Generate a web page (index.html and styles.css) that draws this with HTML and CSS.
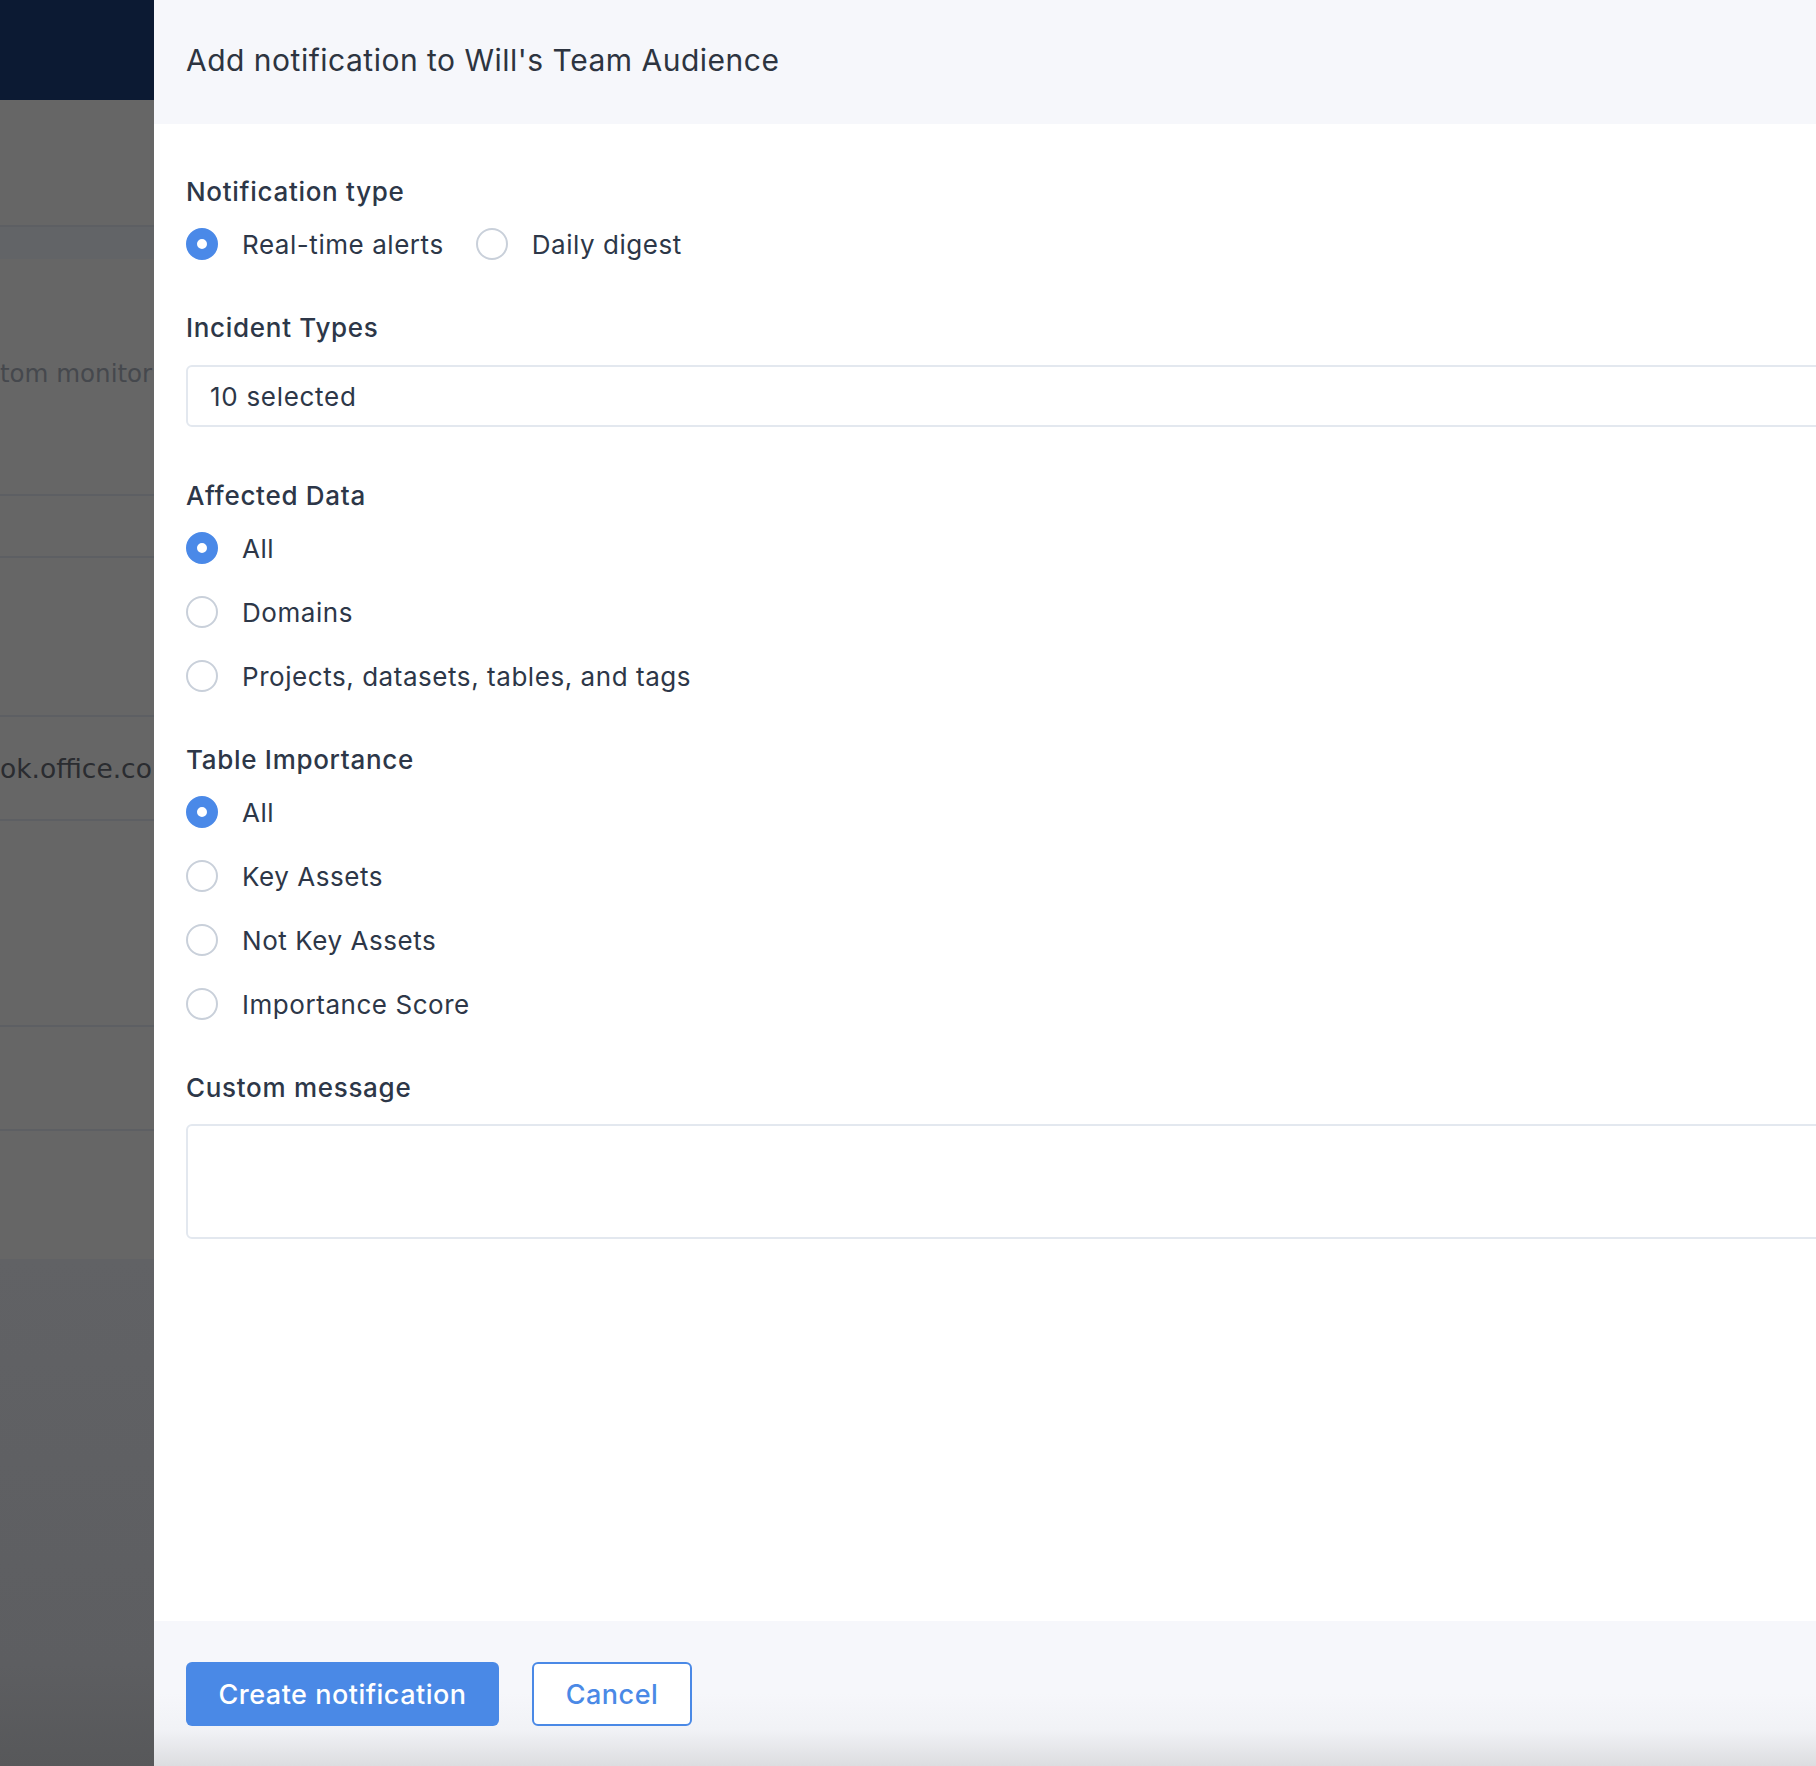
FILE: index.html
```html
<!DOCTYPE html>
<html lang="en">
<head>
    <meta charset="UTF-8">
    <meta name="viewport" content="width=device-width, initial-scale=1.0">
    <title>Add notification</title>
    <link rel="stylesheet" href="styles.css">
</head>
<body>
    <div class="page">
        <!-- dimmed app behind the drawer -->
        <div class="backdrop">
            <div class="bd-nav"></div>
            <div class="bd-row bd-r1"></div>
            <div class="bd-row bd-band"></div>
            <div class="bd-row bd-r2"><span class="bd-text">tom monitor</span></div>
            <div class="bd-row bd-r3"></div>
            <div class="bd-row bd-r4"></div>
            <div class="bd-row bd-r5"><span class="bd-text bd-text-2">ok.office.co</span></div>
            <div class="bd-row bd-r6"></div>
            <div class="bd-row bd-r7"></div>
            <div class="bd-row bd-r8"></div>
            <div class="bd-rest"></div>
        </div>

        <div class="drawer">
            <div class="drawer-header">
                <h1>Add notification to Will's Team Audience</h1>
            </div>

            <form class="drawer-body">
                <div class="section">
                    <div class="field-label">Notification type</div>
                    <div class="radio-inline">
                        <label class="radio"><span class="dot checked"></span>Real-time alerts</label>
                        <label class="radio"><span class="dot"></span>Daily digest</label>
                    </div>
                </div>

                <div class="section">
                    <div class="field-label">Incident Types</div>
                    <div class="text-input select-box">10 selected</div>
                </div>

                <div class="section">
                    <div class="field-label">Affected Data</div>
                    <div class="radio-list">
                        <label class="radio"><span class="dot checked"></span>All</label>
                        <label class="radio"><span class="dot"></span>Domains</label>
                        <label class="radio"><span class="dot"></span>Projects, datasets, tables, and tags</label>
                    </div>
                </div>

                <div class="section">
                    <div class="field-label">Table Importance</div>
                    <div class="radio-list">
                        <label class="radio"><span class="dot checked"></span>All</label>
                        <label class="radio"><span class="dot"></span>Key Assets</label>
                        <label class="radio"><span class="dot"></span>Not Key Assets</label>
                        <label class="radio"><span class="dot"></span>Importance Score</label>
                    </div>
                </div>

                <div class="section">
                    <div class="field-label">Custom message</div>
                    <div class="text-input message-box"></div>
                </div>
            </form>

            <div class="drawer-footer">
                <button type="button" class="btn btn-primary">Create notification</button>
                <button type="button" class="btn btn-outline">Cancel</button>
            </div>
        </div>
    </div>
</body>
</html>
```

FILE: styles.css
```css
* {
    margin: 0;
    padding: 0;
    box-sizing: border-box;
}

body {
    font-family: Inter, "Open Sans", Arial, sans-serif;
    color: #2d3748;
    overflow: hidden;
    background: #ffffff;
}

.page {
    display: flex;
    width: 1816px;
    height: 1766px;
    overflow: hidden;
}

/* backdrop */

.backdrop {
    width: 154px;
    flex-shrink: 0;
    display: flex;
    flex-direction: column;
    background-color: #666666;
    overflow: hidden;
}

.bd-nav {
    height: 100px;
    background-color: #0c1a33;
}

.bd-row {
    display: flex;
    align-items: center;
    border-bottom: 2px solid #5d5f63;
    white-space: nowrap;
}

.bd-r1 { height: 127px; }
.bd-band { height: 32px; background-color: #626467; border-bottom: none; }
.bd-r2 { height: 237px; }
.bd-r3 { height: 62px; }
.bd-r4 { height: 159px; }
.bd-r5 { height: 104px; }
.bd-r6 { height: 206px; }
.bd-r7 { height: 104px; }
.bd-r8 { height: 128px; border-bottom: none; }

.bd-rest {
    flex: 1;
    background: linear-gradient(#616265, #5d5e61 80%, #57585a);
}

.bd-text {
    font-family: "DejaVu Sans", Verdana, sans-serif;
    font-size: 24.5px;
    color: #45484d;
    margin-top: -6px;
}

.bd-text-2 {
    font-size: 26.5px;
    color: #2a2c30;
    margin-top: 0;
}

/* drawer */

.drawer {
    width: 1800px;
    flex-shrink: 0;
    display: flex;
    flex-direction: column;
    background: #ffffff;
}

.drawer-header {
    height: 124px;
    display: flex;
    align-items: center;
    padding: 0 32px 4px;
    background-color: #f6f7fb;
}

.drawer-header h1 {
    font-size: 30px;
    font-weight: 400;
    color: #2d3440;
    letter-spacing: 0.5px;
}

.drawer-body {
    flex: 1;
    padding: 52px 32px 0;
}

.section {
    display: flex;
    flex-direction: column;
    margin-bottom: 50px;
}

.field-label {
    font-size: 26px;
    font-weight: 500;
    line-height: 32px;
    margin-bottom: 18px;
    color: #2d3748;
    letter-spacing: 0.7px;
}

.radio-inline {
    display: flex;
    gap: 32px;
}

.radio-list {
    display: flex;
    flex-direction: column;
    gap: 28px;
}

.radio {
    display: flex;
    align-items: center;
    gap: 24px;
    height: 36px;
    font-size: 26px;
    letter-spacing: 0.55px;
    color: #2d3748;
}

.dot {
    width: 32px;
    height: 32px;
    border-radius: 50%;
    border: 2px solid #c9d0da;
    background: #ffffff;
    flex-shrink: 0;
}

.dot.checked {
    border: 11px solid #4a89e8;
    background: #ffffff;
}

.text-input {
    width: 100%;
    margin: 3px 0;
    border: 2px solid #e3e8ef;
    border-radius: 6px;
    background: #ffffff;
}

.select-box {
    height: 62px;
    display: flex;
    align-items: center;
    padding-left: 22px;
    font-size: 26px;
    letter-spacing: 0.7px;
    color: #2d3748;
}

.message-box {
    height: 115px;
    margin-top: 2px;
}

.drawer-footer {
    height: 145px;
    display: flex;
    align-items: flex-start;
    gap: 33px;
    padding: 41px 32px 0;
    background: linear-gradient(#f6f7fb 50%, #f1f2f6 75%, #dcdde0);
}

.btn {
    height: 64px;
    border-radius: 6px;
    font-family: Inter, "Open Sans", Arial, sans-serif;
    font-size: 27px;
    font-weight: 500;
    letter-spacing: 0.5px;
    cursor: pointer;
}

.btn-primary {
    width: 313px;
    background-color: #4a89e6;
    border: none;
    color: #ffffff;
}

.btn-primary:hover {
    background-color: #3f7bd6;
}

.btn-outline {
    width: 160px;
    background: #ffffff;
    border: 2px solid #4a89e6;
    color: #4a89e6;
}
```
